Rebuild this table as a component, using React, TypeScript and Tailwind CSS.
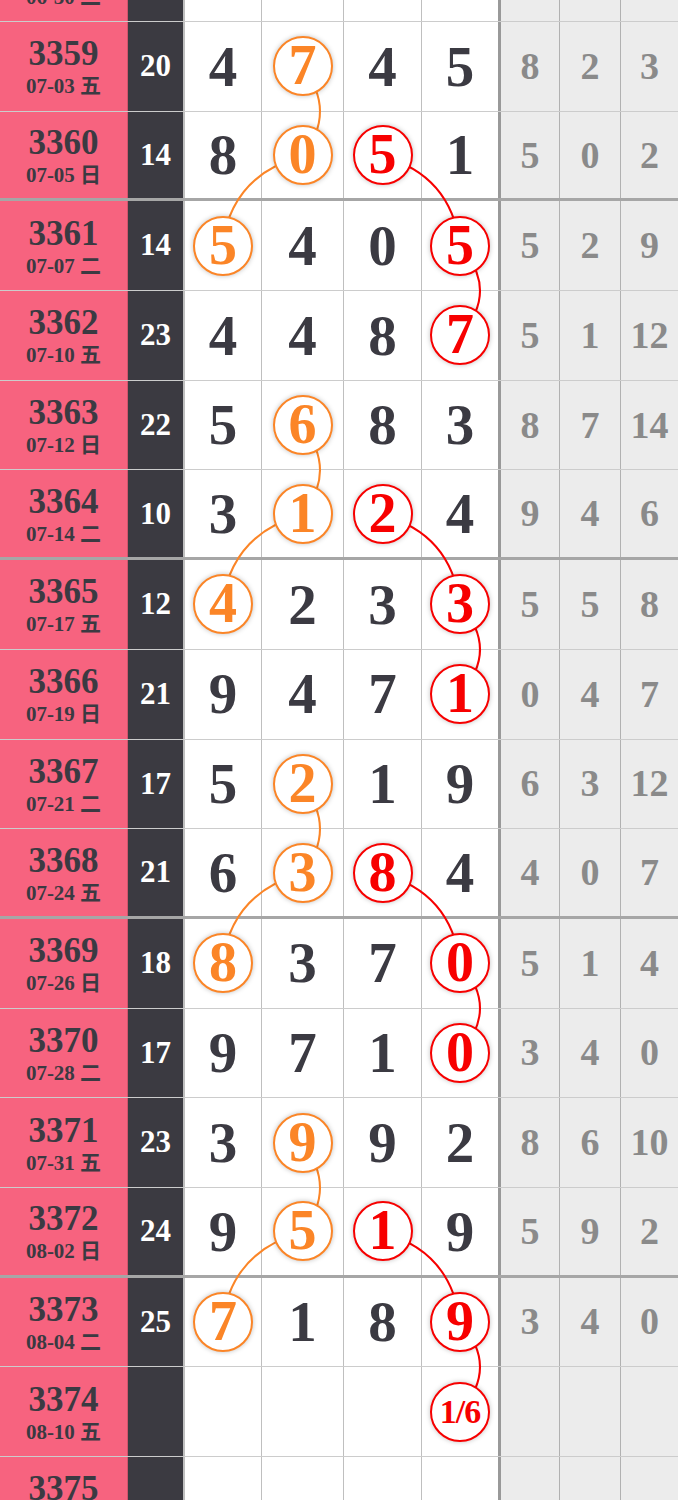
import React from "react";

type Row = {
  no: string;
  date: string;
  sum?: string;
  d?: string[];
  g?: string[];
  o?: number;
  r?: number;
  rt?: string;
};

const H = 89.69;
const CX = [222, 302, 382, 460];

const rows: Row[] = [
  { no: "3358", date: "06-30 二" },
  { no: "3359", date: "07-03 五", sum: "20", d: ["4", "7", "4", "5"], o: 1, g: ["8", "2", "3"] },
  { no: "3360", date: "07-05 日", sum: "14", d: ["8", "0", "5", "1"], o: 1, r: 2, g: ["5", "0", "2"] },
  { no: "3361", date: "07-07 二", sum: "14", d: ["5", "4", "0", "5"], o: 0, r: 3, g: ["5", "2", "9"] },
  { no: "3362", date: "07-10 五", sum: "23", d: ["4", "4", "8", "7"], r: 3, g: ["5", "1", "12"] },
  { no: "3363", date: "07-12 日", sum: "22", d: ["5", "6", "8", "3"], o: 1, g: ["8", "7", "14"] },
  { no: "3364", date: "07-14 二", sum: "10", d: ["3", "1", "2", "4"], o: 1, r: 2, g: ["9", "4", "6"] },
  { no: "3365", date: "07-17 五", sum: "12", d: ["4", "2", "3", "3"], o: 0, r: 3, g: ["5", "5", "8"] },
  { no: "3366", date: "07-19 日", sum: "21", d: ["9", "4", "7", "1"], r: 3, g: ["0", "4", "7"] },
  { no: "3367", date: "07-21 二", sum: "17", d: ["5", "2", "1", "9"], o: 1, g: ["6", "3", "12"] },
  { no: "3368", date: "07-24 五", sum: "21", d: ["6", "3", "8", "4"], o: 1, r: 2, g: ["4", "0", "7"] },
  { no: "3369", date: "07-26 日", sum: "18", d: ["8", "3", "7", "0"], o: 0, r: 3, g: ["5", "1", "4"] },
  { no: "3370", date: "07-28 二", sum: "17", d: ["9", "7", "1", "0"], r: 3, g: ["3", "4", "0"] },
  { no: "3371", date: "07-31 五", sum: "23", d: ["3", "9", "9", "2"], o: 1, g: ["8", "6", "10"] },
  { no: "3372", date: "08-02 日", sum: "24", d: ["9", "5", "1", "9"], o: 1, r: 2, g: ["5", "9", "2"] },
  { no: "3373", date: "08-04 二", sum: "25", d: ["7", "1", "8", "9"], o: 0, r: 3, g: ["3", "4", "0"] },
  { no: "3374", date: "08-10 五", r: 3, rt: "1/6" },
  { no: "3375", date: "08-12 日" },
];

const thick = new Set([2, 6, 10, 14]);
const whiteW = ["w-[78px]", "w-[82px]", "w-[78px]", "w-[77px]"];
const greyW = ["w-[61px] border-l-[3px] border-l-black/35", "w-[61px] border-l border-l-black/25", "flex-1 border-l border-l-black/25"];

const ORANGE = "#fb8527";
const RED = "#f70000";

// quadratic bend between two circle centres, pushed to one side
function bend(a: [number, number], b: [number, number], s: number, side: number) {
  const dx = b[0] - a[0];
  const dy = b[1] - a[1];
  const len = Math.hypot(dx, dy);
  const nx = side > 0 ? dy / len : -dy / len;
  const ny = side > 0 ? -dx / len : dx / len;
  const mx = (a[0] + b[0]) / 2 + nx * s * 2;
  const my = (a[1] + b[1]) / 2 + ny * s * 2;
  return `M${a[0]} ${a[1]} Q${mx} ${my} ${b[0]} ${b[1]}`;
}

function Links() {
  const paths: { d: string; c: string }[] = [];
  rows.forEach((row, i) => {
    const next = rows[i + 1];
    if (!next) return;
    const y1 = i * H + H / 2;
    const y2 = (i + 1) * H + H / 2;
    if (row.o !== undefined && next.o !== undefined) {
      const vert = row.o === next.o;
      paths.push({
        d: bend([CX[row.o], y1], [CX[next.o], y2], vert ? 18 : 20, vert ? 1 : -1),
        c: ORANGE,
      });
    }
    if (row.r !== undefined && next.r !== undefined) {
      const vert = row.r === next.r;
      paths.push({ d: bend([CX[row.r], y1], [CX[next.r], y2], vert ? 20 : 20, 1), c: RED });
    }
  });
  return (
    <svg className="absolute left-0 top-0 z-[1] pointer-events-none" width={678} height={rows.length * H}>
      {paths.map((p, i) => (
        <path key={i} d={p.d} fill="none" stroke={p.c} strokeWidth={2} />
      ))}
    </svg>
  );
}

function Ball({ text, color }: { text: string; color: "o" | "r" }) {
  const small = text.length > 1;
  return (
    <div
      className={`relative z-[2] flex h-[60px] w-[60px] items-center justify-center rounded-full border-2 bg-white shadow-[0_0_5px_rgba(0,0,0,0.25)] ${
        color === "o" ? "border-[#fb8527] text-[#fb8527]" : "border-[#f70000] text-[#f70000]"
      } ${small ? "text-[34px] tracking-[-1px]" : "text-[56px]"}`}
    >
      <span className={small ? "" : "-mt-[2px]"}>{text}</span>
    </div>
  );
}

export default function App() {
  return (
    <div className="h-[1500px] w-[678px] overflow-hidden bg-white font-['Liberation_Serif','Noto_Sans_CJK_SC',serif] font-bold">
      <div className="relative mt-[-67.69px]">
        <Links />
        {rows.map((row, i) => (
          <div
            key={row.no}
            className={`flex h-[89.69px] ${
              thick.has(i) ? "border-b-[3px] border-b-black/35" : "border-b border-b-black/20"
            }`}
          >
            <div className="flex w-[128px] flex-col items-center justify-center border-r border-r-black/15 bg-[#f7637f] pt-[2px] text-[#3b3a42]">
              <div className="text-[35px] leading-[38px]">{row.no}</div>
              <div className="text-[21px] leading-[26px]">{row.date}</div>
            </div>
            <div className="flex w-[55px] items-center justify-center bg-[#3b3a41] text-[31px] text-white">
              {row.sum}
            </div>
            {whiteW.map((w, c) => (
              <div
                key={c}
                className={`flex items-center justify-center bg-white text-[57px] text-[#3b3a42] ${w} ${
                  c === 0 ? "border-l-2 border-l-black/25" : "border-l border-l-black/25"
                }`}
              >
                {row.o === c ? (
                  <Ball text={row.d ? row.d[c] : ""} color="o" />
                ) : row.r === c ? (
                  <Ball text={row.rt ?? (row.d ? row.d[c] : "")} color="r" />
                ) : (
                  row.d?.[c]
                )}
              </div>
            ))}
            {greyW.map((w, c) => (
              <div key={c} className={`flex items-center justify-center bg-[#ececec] text-[38px] text-[#8a8a8a] ${w}`}>
                {row.g?.[c]}
              </div>
            ))}
          </div>
        ))}
      </div>
    </div>
  );
}
